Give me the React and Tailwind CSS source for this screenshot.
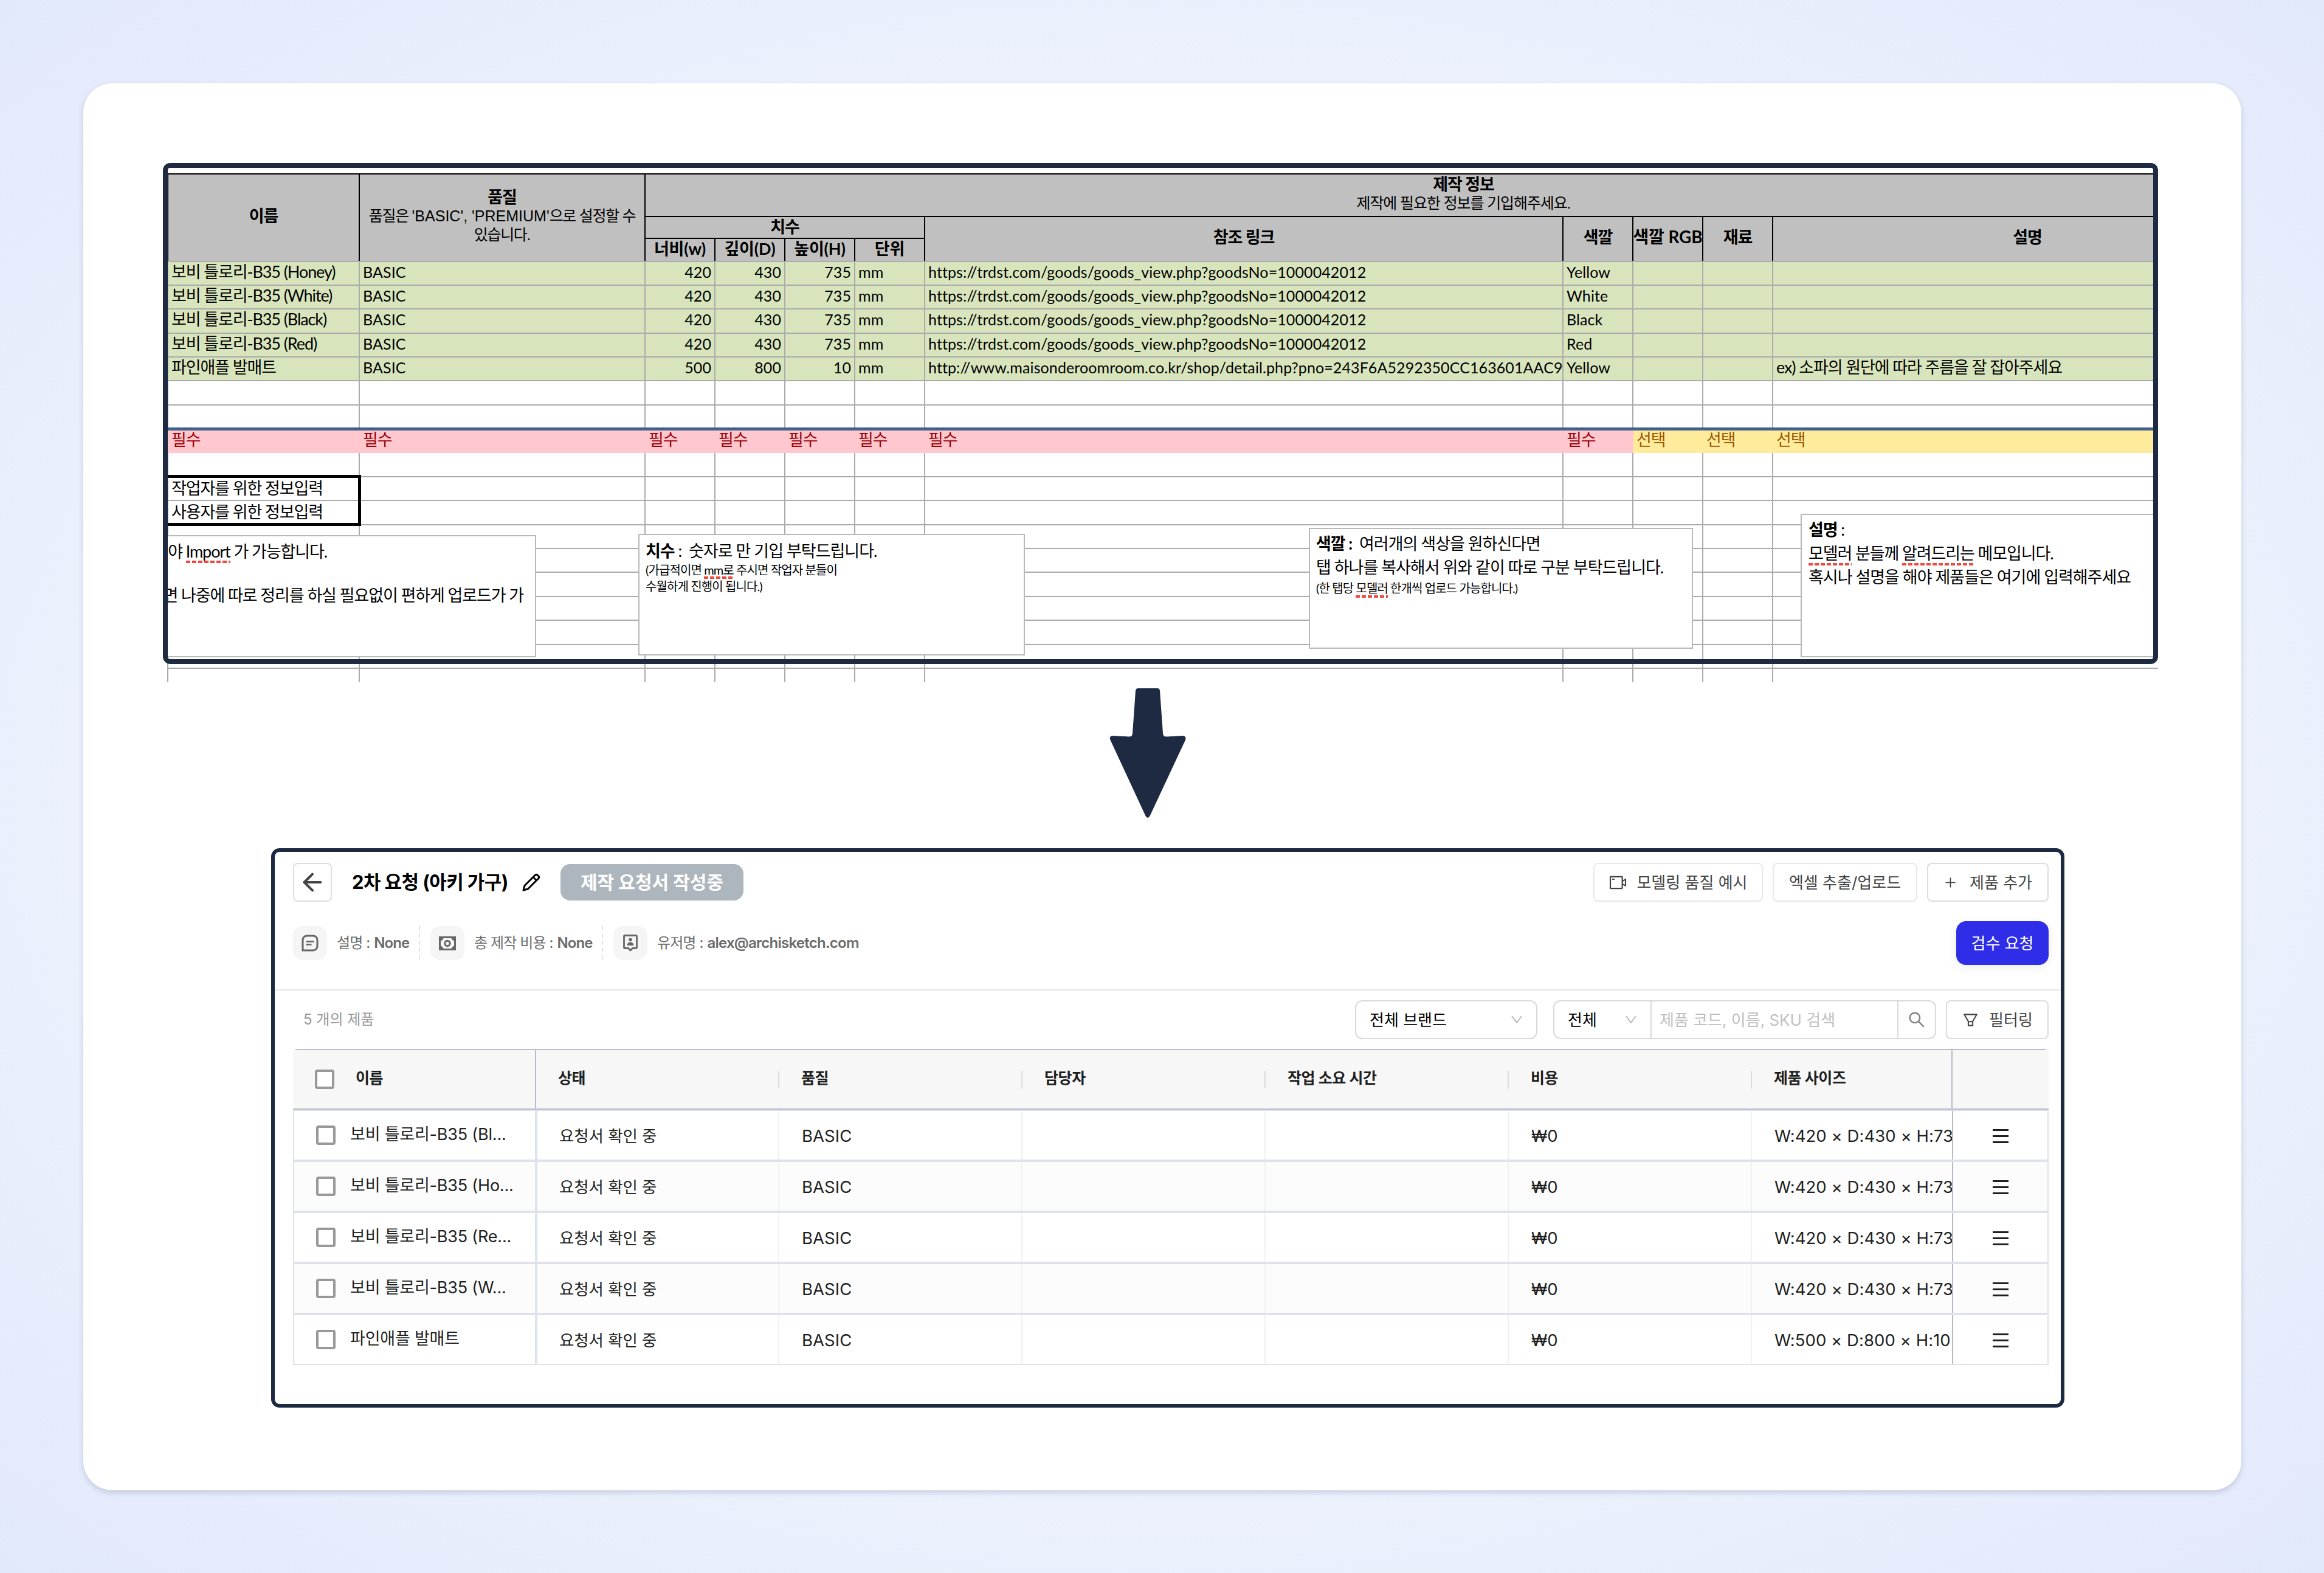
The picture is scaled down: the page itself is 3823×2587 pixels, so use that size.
import { ArrowLeft } from "lucide-react";
import {
    AiOutlineDown,
    AiOutlineFilter,
    AiOutlinePlus,
    AiOutlineSearch,
    AiOutlineVideoCamera,
} from "react-icons/ai";

const COLS = [
    "w-[317px] border-l-2",
    "w-[470px]",
    "w-[115px]",
    "w-[115px]",
    "w-[115px]",
    "w-[115px]",
    "w-[1050px]",
    "w-[115px]",
    "w-[115px]",
    "w-[115px]",
    "w-[836px]",
];

const TRDST = "https://trdst.com/goods/goods_view.php?goodsNo=1000042012";

const SHEET_ROWS = [
    { h: "h-[39px]", cells: ["보비 틀로리-B35 (Honey)", "BASIC", "420", "430", "735", "mm", TRDST, "Yellow", "", "", ""] },
    { h: "h-[39px]", cells: ["보비 틀로리-B35 (White)", "BASIC", "420", "430", "735", "mm", TRDST, "White", "", "", ""] },
    { h: "h-[40px]", cells: ["보비 틀로리-B35 (Black)", "BASIC", "420", "430", "735", "mm", TRDST, "Black", "", "", ""] },
    { h: "h-[39px]", cells: ["보비 틀로리-B35 (Red)", "BASIC", "420", "430", "735", "mm", TRDST, "Red", "", "", ""] },
    {
        h: "h-[39px]",
        cells: [
            "파인애플 발매트", "BASIC", "500", "800", "10", "mm",
            "http://www.maisonderoomroom.co.kr/shop/detail.php?pno=243F6A5292350CC163601AAC9",
            "Yellow", "", "", "ex) 소파의 원단에 따라 주름을 잘 잡아주세요",
        ],
    },
];

const BLANK_ROWS = ["h-[39px]", "h-[39px]", "h-[40px]", "h-[39px]", "h-[40px]"];

const NEED = ["필수", "필수", "필수", "필수", "필수", "필수", "필수", "필수", "선택", "선택", "선택"];

const SheetRow = ({ h, cells = [], green }) => (
    <div className={`flex shrink-0 ${h} ${green ? "bg-[#d8e4bc] leading-[32px]" : "bg-white leading-[35px]"}`}>
        {COLS.map((col, i) => (
            <div
                key={i}
                className={`${col} shrink-0 border-r-2 border-b-2 border-[#ababab] whitespace-nowrap ${i >= 2 && i <= 4 ? "text-right pr-[5px]" : "pl-[5px]"} ${i > 0 && i < 10 ? "text-[25px] tracking-[0.1px]" : ""}`}
            >
                {cells[i]}
            </div>
        ))}
    </div>
);

const SheetHeader = () => (
    <div className="flex h-[146px] shrink-0 border-t-2 border-b-2 border-t-black border-b-[#ababab] bg-[#c0c0c0] text-center font-bold whitespace-nowrap">
        <div className="w-[317px] shrink-0 border-x-2 border-black flex items-center justify-center pb-[6px]">이름</div>
        <div className="w-[470px] shrink-0 border-r-2 border-black pt-[21px]">
            <p className="leading-[32px]">품질</p>
            <p className="leading-[31px] font-normal font-['Liberation_Sans','Noto_Sans_CJK_KR',sans-serif] text-[25px] tracking-[-1.3px]">
                품질은 <span className="tracking-normal">'BASIC', 'PREMIUM'</span>으로 설정할 수<br />있습니다.
            </p>
        </div>
        <div className="w-[2691px] shrink-0">
            <div className="h-[70px] border-b-2 border-black">
                <p className="leading-[32px]">제작 정보</p>
                <p className="leading-[31px] font-normal font-['Liberation_Sans','Noto_Sans_CJK_KR',sans-serif] text-[25px] tracking-[-1.1px]">제작에 필요한 정보를 기입해주세요.</p>
            </div>
            <div className="flex h-[72px]">
                <div className="w-[460px] border-r-2 border-black">
                    <div className="h-[36px] border-b-2 border-black leading-[31px]">치수</div>
                    <div className="flex h-[36px] leading-[31px] tracking-[-0.2px]">
                        <div className="w-[115px] border-r-2 border-black">너비(w)</div>
                        <div className="w-[115px] border-r-2 border-black">깊이(D)</div>
                        <div className="w-[115px] border-r-2 border-black">높이(H)</div>
                        <div className="w-[113px]">단위</div>
                    </div>
                </div>
                <div className="w-[1050px] border-r-2 border-black leading-[65px]">참조 링크</div>
                <div className="w-[115px] border-r-2 border-black leading-[65px]">색깔</div>
                <div className="w-[115px] border-r-2 border-black leading-[65px] flex justify-center text-[28px] tracking-[-0.1px]">색깔 RGB</div>
                <div className="w-[115px] border-r-2 border-black leading-[65px]">재료</div>
                <div className="w-[836px] leading-[65px]">설명</div>
            </div>
        </div>
    </div>
);

const Typo = ({ children }) => (
    <span className="relative inline-block">
        {children}
        <span className="absolute left-0 right-0 bottom-[-1px] h-[4px] bg-[repeating-linear-gradient(90deg,#f0473f_0_7px,transparent_7px_10px)]" />
    </span>
);

const Sheet = () => (
    <div className="relative ml-[131px] h-[854px] w-[3282px] overflow-hidden font-['Lato','Noto_Sans_CJK_KR',sans-serif] text-[27px] tracking-[-1.1px] text-black">
        <div className="flex flex-col pt-[17px] pl-[7px]">
            <SheetHeader />
            {SHEET_ROWS.map((row) => (
                <SheetRow key={row.cells[0]} h={row.h} cells={row.cells} green />
            ))}
            <SheetRow h="h-[40px]" />
            <SheetRow h="h-[38px]" />
            {/* required / optional band */}
            <div className="-mt-[2px] flex h-[42px] shrink-0 border-t-[5px] border-[#3f618c]">
                {COLS.map((col, i) => (
                    <div
                        key={i}
                        className={`${col} shrink-0 border-transparent pl-[5px] leading-[29px] ${i > 7 ? "bg-[#ffeb9c] text-[#9c5700]" : "bg-[#ffc7ce] text-[#9c0006]"}`}
                    >
                        {NEED[i]}
                    </div>
                ))}
            </div>
            <SheetRow h="h-[40px]" />
            <SheetRow h="h-[39px]" cells={["작업자를 위한 정보입력"]} />
            <SheetRow h="h-[40px]" cells={["사용자를 위한 정보입력"]} />
            {BLANK_ROWS.map((h, i) => (
                <SheetRow key={i} h={h} />
            ))}
            <SheetRow h="h-[39px]" />
            <SheetRow h="h-[40px]" />
        </div>

        <div className="absolute left-0 top-[513px] h-[84px] w-[326px] border-5 border-black" />

        {/* floating memos */}
        <div className="absolute left-[-200px] top-[612px] h-[201px] w-[814px] border-2 border-[#b9b9b9] bg-white whitespace-nowrap pt-[7px] text-right">
            <p className="leading-[36px] pr-[342px]">입력해야 <Typo>Import</Typo> 가 가능합니다.</p>
            <p className="leading-[36px] pr-[19px] mt-[36px]">작성하시면 나중에 따로 정리를 하실 필요없이 편하게 업로드가 가</p>
        </div>
        <div className="absolute left-[782px] top-[610px] h-[200px] w-[636px] border-2 border-[#b9b9b9] bg-white whitespace-nowrap pl-[10px] pt-[8px]">
            <p className="leading-[36px] tracking-[-1px]"><b>치수</b> :&nbsp; 숫자로 만 기입 부탁드립니다.</p>
            <p className="leading-[27px] text-[20px] tracking-[-0.9px]">(가급적이면 <Typo>mm로</Typo> 주시면 작업자 분들이</p>
            <p className="leading-[27px] text-[20px] tracking-[-0.9px]">수월하게 진행이 됩니다.)</p>
        </div>
        <div className="absolute left-[1885px] top-[600px] h-[199px] w-[632px] border-2 border-[#b9b9b9] bg-white whitespace-nowrap pl-[10px] pt-[4px]">
            <p className="leading-[39px] tracking-[-1px]"><b>색깔 :</b>&nbsp; 여러개의 색상을 원하신다면</p>
            <p className="leading-[39px] tracking-[-1px]">탭 하나를 복사해서 위와 같이 따로 구분 부탁드립니다.</p>
            <p className="leading-[30px] text-[20px] tracking-[-0.9px]">(한 탭당 <Typo>모델러</Typo> 한개씩 업로드 가능합니다.)</p>
        </div>
        <div className="absolute left-[2694px] top-[577px] h-[236px] w-[620px] border-2 border-[#b9b9b9] bg-white whitespace-nowrap pl-[11px] pt-[4px]">
            <p className="leading-[39px]"><b>설명</b> :</p>
            <p className="leading-[39px]"><Typo>모델러</Typo> 분들께 <Typo>알려드리는</Typo> 메모입니다.</p>
            <p className="leading-[39px] tracking-[-1px]">혹시나 설명을 해야 제품들은 여기에 입력해주세요</p>
        </div>

        <div className="absolute left-0 top-0 h-[824px] w-[3282px] rounded-[12px] border-8 border-[#1d2a42]" />
    </div>
);

const DownArrow = () => (
    <svg className="ml-[1688px] mt-[10px] h-[214px] w-[126px] shrink-0" viewBox="0 0 126 214" fill="#1d2a42">
        <path d="M47 0 H79 Q82.500 0 83 4 L88 74 Q88 79.500 94 79.500 L121 78 Q127 79 125 85 L66.500 210 Q63 216 59.500 210 L1.500 85 Q-1 79 5 78 L33 79.500 Q38 79 38 74 L43 4 Q43.500 0 47 0 Z" />
    </svg>
);

const Checkbox = ({ className = "" }) => (
    <span className={`size-[32px] shrink-0 rounded-[4px] border-4 border-[#999] bg-white ${className}`} />
);

const NoteIcon = () => (
    <svg width="28" height="28" viewBox="0 0 28 28" fill="none" stroke="#666" strokeWidth="3">
        <path d="M2 26 V9 a7 7 0 0 1 7 -7 H19 a7 7 0 0 1 7 7 V19 a7 7 0 0 1 -7 7 Z" />
        <path d="M7.500 11.500 H20.500 M7.500 16.500 H16.500" strokeWidth="2.600" />
    </svg>
);

const MoneyIcon = () => (
    <svg width="28" height="23" viewBox="0 0 28 23" fill="none" stroke="#666">
        <rect x="1.500" y="1.500" width="25" height="20" strokeWidth="3" />
        <path d="M1 1 H8 Q7 7 1 8 Z M27 1 H20 Q21 7 27 8 Z M1 22 H8 Q7 16 1 15 Z M27 22 H20 Q21 16 27 15 Z" fill="#666" stroke="none" />
        <circle cx="14" cy="11.500" r="4.200" strokeWidth="3" />
    </svg>
);

const UserIcon = () => (
    <svg width="24" height="28" viewBox="0 0 24 28" fill="#666">
        <path d="M3 1.500 H21 Q22.500 1.500 22.500 3 V21 Q22.500 22.500 21 22.500 H15.500 L12 26 L8.500 22.500 H3 Q1.500 22.500 1.500 21 V3 Q1.500 1.500 3 1.500 Z" fill="none" stroke="#666" strokeWidth="2.800" />
        <circle cx="12" cy="8.500" r="2.800" />
        <path d="M6.500 18 Q7 12.500 12 12.500 Q17 12.500 17.500 18 Z" />
    </svg>
);

const PencilIcon = () => (
    <svg className="ml-[20px]" width="30" height="30" viewBox="0 0 30 30" fill="none" stroke="#000" strokeWidth="3" strokeLinejoin="round">
        <path d="M2 28 L4 20.500 L21 3.500 Q23 1.500 25 3 L27 5 Q28.500 7 26.500 9 L9.500 26 Z" />
        <path d="M18 6.500 L23.500 12" strokeWidth="2.500" />
    </svg>
);

const INFO = [
    { icon: <NoteIcon />, label: "설명 :", value: "None", w: "w-[209px]" },
    { icon: <MoneyIcon />, label: "총 제작 비용 :", value: "None", w: "w-[284px]" },
    { icon: <UserIcon />, label: "유저명 :", value: "alex@archisketch.com", w: "" },
];

const HEADS = ["상태", "품질", "담당자", "작업 소요 시간", "비용", "제품 사이즈"];

const PRODUCTS = [
    ["보비 틀로리-B35 (Bl...", "W:420 × D:430 × H:735"],
    ["보비 틀로리-B35 (Ho...", "W:420 × D:430 × H:735"],
    ["보비 틀로리-B35 (Re...", "W:420 × D:430 × H:735"],
    ["보비 틀로리-B35 (W...", "W:420 × D:430 × H:735"],
    ["파인애플 발매트", "W:500 × D:800 × H:10"],
];

const ProductTable = () => (
    <div className="mx-[30px] mt-[16px] w-[2888px] overflow-hidden rounded-t-[8px] text-[#1d1f21]">
        <div className="flex h-[100px] border-t-2 border-b-2 border-[#babdc9] bg-[#f7f7f7] text-[25px] font-bold tracking-[-0.4px]">
            <div className="flex w-[400px] shrink-0 items-center border-r-2 border-[#babdc9] pl-[36px]">
                <Checkbox />
                <span className="ml-[35px] pb-[3px]">이름</span>
            </div>
            <div className="flex w-[2330px] shrink-0 overflow-hidden border-r-2 border-[#babdc9]">
                {HEADS.map((head) => (
                    <div key={head} className="flex w-[400px] shrink-0 items-center">
                        <span className="flex-1 pl-[36px] pb-[3px]">{head}</span>
                        <span className="h-[29px] w-[2px] bg-[#dcdcde]" />
                    </div>
                ))}
            </div>
        </div>
        <div className="border-x-2 border-t-2 border-[#dfe2ea]">
            {PRODUCTS.map(([name, size], i) => (
                <div
                    key={name}
                    className={`flex border-[#dfe2ea] text-[27.5px] whitespace-nowrap ${i === 4 ? "h-[82px] border-b-2" : "h-[84px] border-b-4"} ${i % 2 ? "bg-[#fcfcfc]" : "bg-white"}`}
                >
                    <div className="flex w-[400px] shrink-0 items-center border-r-4 border-[#dfe2ea] pl-[36px]">
                        <Checkbox />
                        <span className="ml-[24px] pb-[1px] text-[27px] tracking-[-0.2px]">{name}</span>
                    </div>
                    <div className="flex w-[2329px] shrink-0 overflow-hidden border-r-2 border-[#b7bac5] tracking-[0.05px]">
                        <div className="flex w-[398px] shrink-0 items-center border-r-2 border-[#f1f1f3] pl-[36px] pt-[3px] text-[26.5px] tracking-[-0.1px]">요청서 확인 중</div>
                        <div className="flex w-[400px] shrink-0 items-center border-r-2 border-[#f1f1f3] pl-[37px] pt-[4px]">BASIC</div>
                        <div className="w-[400px] shrink-0 border-r-2 border-[#f1f1f3]" />
                        <div className="w-[400px] shrink-0 border-r-2 border-[#f1f1f3]" />
                        <div className="flex w-[400px] shrink-0 items-center border-r-2 border-[#f1f1f3] pl-[37px] pt-[4px]">₩0</div>
                        <div className="flex w-[400px] shrink-0 items-center pl-[37px] pt-[4px]">{size}</div>
                    </div>
                    <div className="flex flex-1 flex-col items-center justify-center gap-[7px] pt-[2px]">
                        <span className="h-[3px] w-[26px] bg-[#1d1f21]" />
                        <span className="h-[3px] w-[26px] bg-[#1d1f21]" />
                        <span className="h-[3px] w-[26px] bg-[#1d1f21]" />
                    </div>
                </div>
            ))}
        </div>
    </div>
);

const RequestPanel = () => (
    <div className="ml-[309px] mt-[49px] h-[920px] w-[2950px] shrink-0 rounded-[14px] border-6 border-[#1d2a42] bg-white font-['Inter','Noto_Sans_CJK_KR',sans-serif] text-[26px] whitespace-nowrap">
        <div className="flex items-center pl-[30px] pr-[20px] pt-[18px] text-[#434343]">
            <div className="flex size-[64px] items-center justify-center rounded-[8px] border-2 border-[#dedede]">
                <ArrowLeft size={46} strokeWidth={2.1} color="#444" />
            </div>
            <h1 className="ml-[33px] w-[260px] text-[31px] font-bold text-black tracking-[-0.6px]">2차 요청 (아키 가구)</h1>
            <PencilIcon />
            <div className="ml-[33px] flex h-[60px] w-[301px] items-center justify-center rounded-[16px] bg-[#adb5bd] text-[30px] font-bold text-white">
                제작 요청서 작성중
            </div>
            <div className="ml-auto flex gap-[16px]">
                <div className="flex h-[64px] w-[279px] items-center justify-center gap-[15px] rounded-[8px] border-2 border-[#e8e8e8]">
                    <AiOutlineVideoCamera size={31} />모델링 품질 예시
                </div>
                <div className="flex h-[64px] w-[238px] items-center justify-center rounded-[8px] border-2 border-[#e8e8e8]">엑셀 추출/업로드</div>
                <div className="flex h-[64px] w-[200px] items-center justify-center gap-[20px] rounded-[8px] border-2 border-[#dcdcdc]">
                    <AiOutlinePlus size={23} />제품 추가
                </div>
            </div>
        </div>

        <div className="flex h-[146px] items-start border-b-2 border-[#e6e6e8] pl-[30px] pr-[20px] pt-[32px]">
            <div className="flex pt-[8px] text-[24px] text-[#6b6b6b] tracking-[-0.9px]">
                {INFO.map((item, i) => (
                    <div
                        key={item.label}
                        className={`flex h-[56px] items-center ${item.w} ${i < 2 ? "bg-[repeating-linear-gradient(180deg,#e2e2e2_0_7px,transparent_7px_12px)] bg-[length:2px_100%] bg-right bg-no-repeat mr-[17px]" : ""}`}
                    >
                        <span className="flex size-[56px] shrink-0 items-center justify-center rounded-[16px] bg-[#f5f5f5]">{item.icon}</span>
                        <span className="ml-[16px]">{item.label}</span>
                        <span className={`ml-[7px] font-semibold ${i === 2 ? "tracking-[-0.75px]" : ""}`}>{item.value}</span>
                    </div>
                ))}
            </div>
            <div className="ml-auto flex h-[72px] w-[152px] items-center justify-center rounded-[16px] bg-[#2f2de8] text-white shadow-[0_4px_16px_rgba(0,0,0,0.08)]">검수 요청</div>
        </div>

        <div className="flex items-center pl-[47px] pr-[20px] pt-[16px]">
            <span className="text-[24px] text-[#9a9a9a]">5 개의 제품</span>
            <div className="ml-auto flex h-[64px] w-[300px] items-center justify-between rounded-[12px] border-2 border-[#d9d9d9] pl-[22px] pr-[20px] text-black">
                전체 브랜드 <AiOutlineDown size={24} color="#b8b8b8" />
            </div>
            <div className="ml-[26px] flex h-[64px] w-[630px] items-center rounded-[12px] border-2 border-[#d9d9d9]">
                <div className="flex h-full w-[160px] items-center justify-between border-r-2 border-[#d9d9d9] pl-[22px] pr-[20px] text-black">
                    전체 <AiOutlineDown size={24} color="#b8b8b8" />
                </div>
                <div className="flex-1 pl-[13px] text-[#bfbfbf]">제품 코드, 이름, SKU 검색</div>
                <div className="flex h-full w-[62px] items-center justify-center border-l-2 border-[#d9d9d9]">
                    <AiOutlineSearch size={32} color="#808080" />
                </div>
            </div>
            <div className="ml-[16px] flex h-[64px] w-[169px] items-center justify-center gap-[16px] rounded-[8px] border-2 border-[#dcdcdc] text-[#434343]">
                <AiOutlineFilter size={29} />필터링
            </div>
        </div>

        <ProductTable />
    </div>
);

const App = () => {
    return (
        <div className="h-[2587px] w-[3823px] overflow-hidden bg-[radial-gradient(ellipse_at_center,#f4f7ff_0%,#eef2fe_60%,#e2e9fa_100%)] p-[137px]">
            <div className="flex h-[2314px] w-[3550px] flex-col rounded-[48px] bg-white pt-[131px] shadow-[0_4px_10px_rgba(40,50,90,0.18)]">
                <Sheet />
                <DownArrow />
                <RequestPanel />
            </div>
        </div>
    );
};

export default App;
